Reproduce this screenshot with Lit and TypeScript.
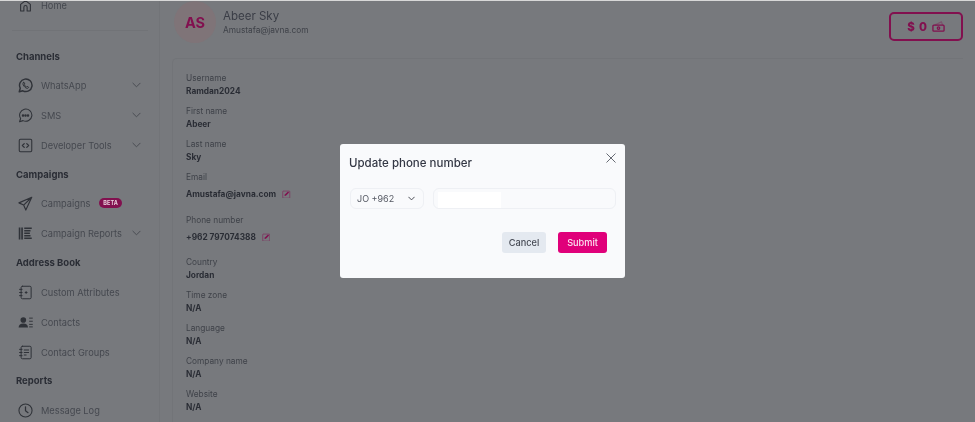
import { LitElement, html, css, svg } from "lit";
import { customElement } from "lit/decorators.js";

const ic = (body: unknown) => html`<svg class="ic" viewBox="0 0 24 24" fill="none" stroke="currentColor" stroke-width="2" stroke-linecap="round" stroke-linejoin="round">${body}</svg>`;
const icons: Record<string, unknown> = {
  home: svg`<path d="M3 22V10l9-7 9 7v12h-6v-7a3 3 0 0 0-6 0v7z"/>`,
  wa: svg`<path d="M2 22l1.600-5.700A10 10 0 1 1 7.800 20.500z" stroke-width="2.300"/><path d="M8.500 7.500c-1 1-1 3 1 5.500s4.500 4 6 3.500 1.500-1.500 1.300-2l-2.300-1.200-1 1c-1.500-.5-3-2-3.500-3.500l1-1-1-2.500c-.5-.4-1-.5-1.500-.3z" stroke-width="1.500"/>`,
  sms: svg`<path d="M2.500 22l1.700-5.200A9.800 9.800 0 1 1 8 20.200z" stroke-width="1.700"/><circle cx="8" cy="12" r="1" fill="currentColor"/><circle cx="12" cy="12" r="1" fill="currentColor"/><circle cx="16" cy="12" r="1" fill="currentColor"/>`,
  dev: svg`<rect x="2" y="2" width="20" height="20" rx="2" stroke-width="1.700"/><path d="M10 9l-3 3 3 3M14 9l3 3-3 3"/>`,
  send: svg`<path d="M22 2L1.500 11l7.500 3.500 3.500 8zM22 2L9 14.500" stroke-width="1.800"/>`,
  rep: svg`<path d="M2.500 2.500v19M6.500 2.500v19" stroke-width="2.600" stroke-linecap="butt"/><path d="M10 3.500h12M10 7.500h10M10 11.500h9M10 15.500h10M10 19.500h12" stroke-width="2.200" stroke-linecap="butt"/>`,
  attr: svg`<rect x="5" y="2" width="16" height="20" rx="2" stroke-width="1.600"/><path d="M2.500 7h4M2.500 12h4M2.500 17h4M13 10.500v3M11.500 12h3" stroke-width="1.600"/>`,
  contacts: svg`<circle cx="8.500" cy="8" r="4.500" fill="currentColor" stroke="none"/><path d="M1 20c0-4 3-6.500 7.500-6.500S16 16 16 20z" fill="currentColor" stroke="none"/><path d="M18.500 5h4.500M18.500 10h4.500M18.500 15h4.500M18.500 19h4.500" stroke-width="1.500"/>`,
  groups: svg`<rect x="5" y="2" width="16" height="20" rx="2" stroke-width="1.600"/><path d="M2.500 7h4M2.500 12h4M2.500 17h4M10 8h7M10 12h7M10 16h3" stroke-width="1.600"/>`,
  clock: svg`<circle cx="12" cy="12" r="10.500" stroke-width="1.700"/><path d="M12 6v6.500l4 3"/>`,
};

type Row = { t: string; i: string; chev?: boolean; beta?: boolean };
const groups: { h: string; low?: boolean; rows: Row[] }[] = [
  { h: "Channels", rows: [
    { t: "WhatsApp", i: "wa", chev: true },
    { t: "SMS", i: "sms", chev: true },
    { t: "Developer Tools", i: "dev", chev: true },
  ]},
  { h: "Campaigns", rows: [
    { t: "Campaigns", i: "send", beta: true },
    { t: "Campaign Reports", i: "rep", chev: true },
  ]},
  { h: "Address Book", low: true, rows: [
    { t: "Custom Attributes", i: "attr" },
    { t: "Contacts", i: "contacts" },
    { t: "Contact Groups", i: "groups" },
  ]},
  { h: "Reports", low: true, rows: [{ t: "Message Log", i: "clock" }]},
];

const fields: { l: string; v: string; edit?: boolean; c?: string }[] = [
  { l: "Username", v: "Ramdan2024" },
  { l: "First name", v: "Abeer" },
  { l: "Last name", v: "Sky" },
  { l: "Email", v: "Amustafa@javna.com", edit: true, c: "e" },
  { l: "Phone number", v: "+962 797074388", edit: true, c: "e p" },
  { l: "Country", v: "Jordan" },
  { l: "Time zone", v: "N/A" },
  { l: "Language", v: "N/A" },
  { l: "Company name", v: "N/A" },
  { l: "Website", v: "N/A" },
];

const chev = html`<svg class="chev" viewBox="0 0 10 6" fill="none" stroke="currentColor" stroke-width="1" stroke-linecap="round" stroke-linejoin="round"><path d="M1 1l4 4 4-4"/></svg>`;
const edit = html`<svg class="edit" viewBox="0 0 12 12" fill="none"><rect x="1" y="1.500" width="10" height="10" rx="1" stroke="currentColor" stroke-width="1" opacity=".7"/><path d="M3.500 8.500l.5-2L8.500 2l1.500 1.500L5.500 8z" fill="currentColor"/></svg>`;

@customElement("app-root")
export class AppRoot extends LitElement {
  static styles = css`
    :host { display: block; width: 975px; height: 422px; overflow: hidden; position: relative; background: #77797d; font-family: Inter, "Liberation Sans", sans-serif; color: #383c46; }
    .page { display: flex; height: 422px; overflow: hidden; border-top: 1px solid #d8d8d8; box-sizing: border-box; filter: blur(0.4px); }
    .side { width: 160px; flex: none; box-sizing: border-box; padding: 0 0 0 16px; border-right: 1px solid #727478; margin-top: -11px; }
    .row { height: 30px; box-sizing: border-box; display: flex; align-items: center; color: #45484f; font-size: 9.250px; }
    .low .row { padding-top: 2px; }
    .row .ic { width: 15px; height: 15px; margin-left: 2px; margin-right: 8px; color: #2f3238; flex: none; }
    .home .ic { width: 13px; height: 13px; margin-left: 3px; margin-right: 9px; }
    .grow { flex: 1; }
    .chev { width: 9px; height: 6px; margin-right: 18px; color: #45484f; }
    .beta { margin-left: 9px; background: #82104f; color: #e8cfdc; font-size: 5.500px; font-weight: 700; border-radius: 5px; padding: 2px 4px; height: 6px; line-height: 6px; letter-spacing: .1px; }
    .divider { height: 1px; background: #717377; margin: 10px 11px 0 -4px; }
    .divider + .sec { margin-top: 11px; }
    .h { height: 28px; display: flex; align-items: center; font-size: 9.500px; font-weight: 700; color: #2a2d35; }
    .main { flex: 1; padding: 0 12px 0 12px; min-width: 0; }
    .top { display: flex; height: 57px; align-items: flex-start; }
    .avatar { width: 42px; height: 42px; border-radius: 50%; background: #7f7478; color: #82104f; font-weight: 700; font-size: 14.500px; display: flex; align-items: center; justify-content: center; margin: 0 7px 0 2px; flex: none; }
    .who { padding-top: 8px; }
    .name { font-size: 11.500px; line-height: 14px; color: #3a3d46; }
    .mail { font-size: 8.300px; line-height: 12px; margin-top: 1px; color: #3f4249; }
    .wallet { margin-left: auto; margin-top: 11px; width: 74px; height: 29px; box-sizing: border-box; border: 2px solid #82104f; border-radius: 5px; display: flex; align-items: center; justify-content: center; gap: 4px; color: #82104f; font-size: 11.500px; font-weight: 800; letter-spacing: .8px; }
    .wallet svg { width: 13px; height: 11px; }
    .card { border: 1px solid #727478; border-right: none; border-bottom: none; border-radius: 5px 0 0 0; padding: 14px 0 0 13px; height: 400px; }
    .f { height: 33px; }
    .f .l { font-size: 8.300px; line-height: 11px; margin-bottom: 1px; color: #3f4249; }
    .f .v { font-size: 8.300px; line-height: 12px; font-weight: 700; color: #2a2d35; display: flex; align-items: center; }
    .f.e { height: 43px; }
    .f.p { height: 42px; }
    .f.e .v { margin-top: 5px; }
    .edit { width: 8.500px; height: 8.500px; margin-left: 6px; color: #82104f; }
    .modal { position: absolute; left: 340px; top: 144px; width: 285px; height: 134px; box-sizing: border-box; background: #f9fafc; border-radius: 3px; padding: 10px 9px 0 9px; filter: blur(0.3px); }
    .title { font-size: 11.500px; font-weight: 500; line-height: 18px; color: #333744; }
    .x { position: absolute; right: 9px; top: 9px; width: 10px; height: 10px; color: #555963; }
    .inputs { display: flex; gap: 9px; margin-top: 16px; padding-left: 1px; }
    .sel { width: 74px; height: 21px; box-sizing: border-box; border: 1px solid #eef0f4; border-radius: 6px; display: flex; align-items: center; justify-content: space-between; padding: 0 8px 0 6px; font-size: 9px; color: #555963; }
    .sel svg { width: 7px; height: 5px; color: #3a3d46; margin: 0; }
    .inp { width: 183px; height: 21px; box-sizing: border-box; border: 1px solid #eef0f4; border-radius: 6px; padding: 3px 0 0 4px; }
    .patch { width: 63px; height: 16px; background: #fff; }
    .btns { display: flex; justify-content: flex-end; gap: 12px; margin-top: 23px; padding-right: 9px; }
    .btn { height: 21px; border-radius: 3px; display: flex; align-items: center; justify-content: center; font-size: 9.200px; font-weight: 500; }
    .cancel { width: 44px; background: #e4e9f0; color: #474b55; }
    .submit { width: 49px; background: #e0007a; color: #fbe3f0; }
  `;

  render() {
    return html`
      <div class="page">
        <nav class="side">
          <div class="row home">${ic(icons.home)}<span>Home</span></div>
          <div class="divider"></div>
          ${groups.map((g) => html`
            <div class="sec ${g.low ? "low" : ""}"><div class="h">${g.h}</div>
            ${g.rows.map((r) => html`
              <div class="row">${ic(icons[r.i])}<span>${r.t}</span>
                ${r.beta ? html`<span class="beta">BETA</span>` : ""}
                <span class="grow"></span>${r.chev ? chev : ""}</div>`)}
            </div>`)}
        </nav>
        <main class="main">
          <div class="top">
            <div class="avatar">AS</div>
            <div class="who"><div class="name">Abeer Sky</div><div class="mail">Amustafa@javna.com</div></div>
            <div class="wallet"><span>$ 0</span>
              <svg viewBox="0 0 14 11" fill="none" stroke="currentColor" stroke-width="1.400"><rect x="1" y="4" width="12" height="6.500" rx="1"/><circle cx="7" cy="7.200" r="1.300"/><path d="M3 4l7-3.500 1.500 3.500" opacity=".35"/></svg>
            </div>
          </div>
          <section class="card">
            ${fields.map((f) => html`<div class="f ${f.c ?? ""}"><div class="l">${f.l}</div><div class="v">${f.v}${f.edit ? edit : ""}</div></div>`)}
          </section>
        </main>
      </div>
      <div class="modal">
        <div class="title">Update phone number</div>
        <svg class="x" viewBox="0 0 10 10" stroke="currentColor" stroke-width=".9" fill="none"><path d="M.5.500l9 9M9.500.500l-9 9"/></svg>
        <div class="inputs">
          <div class="sel"><span>JO +962</span><svg viewBox="0 0 10 6" fill="none" stroke="currentColor" stroke-width="1.300" stroke-linecap="round" stroke-linejoin="round"><path d="M1 1l4 4 4-4"/></svg></div>
          <div class="inp"><div class="patch"></div></div>
        </div>
        <div class="btns"><div class="btn cancel">Cancel</div><div class="btn submit">Submit</div></div>
      </div>
    `;
  }
}
